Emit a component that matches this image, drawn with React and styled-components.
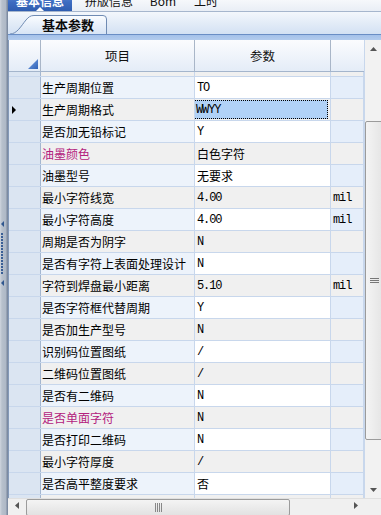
import React from 'react';
import styled, { createGlobalStyle } from 'styled-components';

const GlobalStyle = createGlobalStyle`
  html, body { margin: 0; padding: 0; overflow: hidden; background: #ffffff; }
  body { font-family: "Noto Sans CJK SC", "Noto Sans", sans-serif; font-size: 12px; color: #000; }
  * { box-sizing: border-box; }
`;

const Page = styled.div`
  width: 381px;
  height: 515px;
  display: flex;
  overflow: hidden;
`;

const LeftStrip = styled.div`
  width: 8px;
  flex: none;
  background: linear-gradient(to right, #cfd5de 0px, #b7c0cc 2px, #aeb8c6 6px, #7d8ba1 7px);
  display: flex;
  flex-direction: column;
  align-items: flex-start;
  padding-top: 221px;
`;

const SplitArrow = styled.div`
  width: 0;
  height: 0;
  margin-left: 1px;
  border-top: 3px solid transparent;
  border-bottom: 3px solid transparent;
  border-right: 3px solid #30578f;
`;

const SplitDots = styled.div`
  width: 2px;
  height: 42px;
  margin: 6px 0 5px 1px;
  background: repeating-linear-gradient(to bottom, #3a5f96 0px, #3a5f96 2px, transparent 2px, transparent 3px);
`;

const Main = styled.div`
  flex: 1;
  display: flex;
  flex-direction: column;
  min-width: 0;
`;

const TopTabs = styled.div`
  height: 12px;
  flex: none;
  overflow: hidden;
  display: flex;
  align-items: flex-end;
  background: linear-gradient(to bottom, #f6f8fb, #e9eef5);
  border-bottom: 1px solid #a6b6cd;
`;

const TopTab = styled.div`
  position: relative;
  height: 22px;
  flex: none;
  width: ${p => p.$w}px;
  display: flex;
  align-items: center;
  justify-content: center;
  font-size: 12px;
  font-weight: ${p => (p.$active ? 700 : 400)};
  color: ${p => (p.$active ? '#ffffff' : '#111')};
  background: ${p => (p.$active ? 'linear-gradient(to bottom, #6f9be0, #3d6cc1 60%, #2f5db0)' : 'transparent')};
  ${p => p.$active && `
    &::after {
      content: '';
      position: absolute;
      left: 28px;
      bottom: 0;
      width: 0;
      height: 0;
      border-left: 4px solid transparent;
      border-right: 4px solid transparent;
      border-bottom: 4px solid #ffffff;
    }
  `}
`;

const SubBar = styled.div`
  height: 22px;
  flex: none;
  background: linear-gradient(to bottom, #f3f7fc, #d3e1f3);
  display: flex;
  align-items: flex-end;
  padding-left: 2px;
`;

const SubTab = styled.div`
  position: relative;
  width: 97px;
  height: 19px;
  display: flex;
  align-items: center;
  padding-left: 32px;
  font-size: 13px;
  font-weight: 700;
  color: #0b0b0b;
`;

const TabShape = styled.svg`
  position: absolute;
  left: 0;
  top: 0;
  z-index: 0;
`;

const SubTabLabel = styled.span`
  position: relative;
  z-index: 1;
  line-height: 13px;
`;

const BlueBand = styled.div`
  height: 6px;
  flex: none;
  border-top: 1px solid #6a8ec5;
  background: linear-gradient(to bottom, #a4c1ea, #b3cced);
`;

const GridArea = styled.div`
  flex: 1;
  display: flex;
  flex-direction: column;
  min-height: 0;
`;

const GridMain = styled.div`
  flex: 1;
  display: flex;
  min-height: 0;
`;

const Table = styled.div`
  width: 356px;
  flex: none;
  display: flex;
  flex-direction: column;
  border-left: 1px solid #8499b8;
  min-height: 0;
`;

const Cols = `32px 154px 136px 33px`;

const HeaderRow = styled.div`
  height: 32px;
  flex: none;
  display: grid;
  grid-template-columns: ${Cols};
  background: linear-gradient(to bottom, #fbfcfe, #e4ecf7);
  border-bottom: 1px solid #a4b5cc;
`;

const HeaderCell = styled.div`
  display: flex;
  align-items: center;
  justify-content: center;
  position: relative;
  border-right: ${p => (p.$last ? 'none' : '1px solid #a9b6c8')};
  font-size: 12.5px;
  color: #111;
`;

const CornerMark = styled.svg`
  position: absolute;
  right: 2px;
  bottom: 2px;
`;

const Body = styled.div`
  flex: 1;
  overflow: hidden;
  min-height: 0;
`;

const Row = styled.div`
  height: ${p => p.$h}px;
  display: grid;
  grid-template-columns: ${Cols};
  border-bottom: 1px solid #c8d7ec;
`;

const RowHead = styled.div`
  background: #dbe5f2;
  border-right: 1px solid #a3b6d0;
  display: flex;
  align-items: center;
  padding-left: 3px;
`;

const Cell = styled.div`
  display: flex;
  align-items: center;
  overflow: hidden;
  white-space: nowrap;
  padding-left: ${p => p.$pad}px;
  border-right: 1px solid #c8d7ec;
  background: ${p => p.$bg};
  color: ${p => (p.$pink ? '#b3207d' : '#000')};
  font-size: 12px;
`;

const ValueText = styled.span`
  display: inline-flex;
  align-items: center;
  height: 19px;
  padding-left: 1px;
  font-family: ${p => (p.$mono ? '"Liberation Mono", "Noto Sans CJK SC", monospace' : '"Noto Sans CJK SC", sans-serif')};
  font-size: 12px;
  letter-spacing: ${p => (p.$mono ? '-1.1px' : '0')};
  font-weight: 400;
  ${p => p.$selected && `
    width: 134px;
    margin-left: -2px;
    padding-left: 2px;
    background: #b1d2f7;
    outline: 1px dotted #000;
    outline-offset: -1px;
  `}
`;

const VScroll = styled.div`
  width: 17px;
  flex: none;
  position: relative;
  background: #f2f2f2;
  border-left: 1px solid #c8d7ec;
  display: flex;
  flex-direction: column;
  align-items: stretch;
`;

const ArrowBox = styled.div`
  height: 17px;
  flex: none;
  display: flex;
  align-items: center;
  justify-content: center;
`;

const Thumb = styled.div`
  margin-top: ${p => p.$top}px;
  height: ${p => p.$h}px;
  margin-left: 0;
  margin-right: -3px;
  border: 1px solid #9b9b9b;
  border-radius: 2px;
  background: linear-gradient(to right, #f4f4f4, #e4e4e4);
  display: flex;
  align-items: center;
  justify-content: center;
`;

const Spacer = styled.div`
  flex: 1;
`;

const HScrollRow = styled.div`
  height: 17px;
  flex: none;
  display: flex;
  border-top: 1px solid #e0e0e0;
`;

const HScroll = styled.div`
  width: 356px;
  flex: none;
  background: #f0f0f0;
  display: flex;
  align-items: flex-start;
`;

const HArrow = styled.div`
  width: 17px;
  height: 12px;
  flex: none;
  display: flex;
  align-items: center;
  justify-content: center;
`;

const HThumb = styled.div`
  width: 264px;
  height: 17px;
  margin-left: 1px;
  border: 1px solid #9b9b9b;
  border-radius: 2px;
  background: linear-gradient(to bottom, #f4f4f4, #e2e2e2);
  display: flex;
  justify-content: center;
  padding-top: 3px;
`;

const Corner = styled.div`
  width: 17px;
  flex: none;
  background: #f0f0f0;
`;

const rows = [
  { name: '', value: '', partial: true },
  { name: '生产周期位置', value: 'TO' },
  { name: '生产周期格式', value: 'WWYY', selected: true },
  { name: '是否加无铅标记', value: 'Y' },
  { name: '油墨颜色', value: '白色字符', pink: true },
  { name: '油墨型号', value: '无要求' },
  { name: '最小字符线宽', value: '4.00', unit: 'mil' },
  { name: '最小字符高度', value: '4.00', unit: 'mil' },
  { name: '周期是否为阴字', value: 'N' },
  { name: '是否有字符上表面处理设计', value: 'N' },
  { name: '字符到焊盘最小距离', value: '5.10', unit: 'mil' },
  { name: '是否字符框代替周期', value: 'Y' },
  { name: '是否加生产型号', value: 'N' },
  { name: '识别码位置图纸', value: '/' },
  { name: '二维码位置图纸', value: '/' },
  { name: '是否有二维码', value: 'N' },
  { name: '是否单面字符', value: 'N', pink: true },
  { name: '是否打印二维码', value: 'N' },
  { name: '最小字符厚度', value: '/' },
  { name: '是否高平整度要求', value: '否' },
  { name: '是否大板加批次号', value: '' },
];

const isAscii = s => /^[\x00-\x7f]*$/.test(s);

const Tri = ({ dir }) => {
  const pts = {
    up: '0,4 7,4 3.5,0',
    down: '0,0 7,0 3.5,4',
  };
  return (
    <svg width="7" height="4" viewBox="0 0 7 4">
      <polygon points={pts[dir]} fill="#555" />
    </svg>
  );
};

const HTri = ({ dir }) => (
  <svg width="4" height="7" viewBox="0 0 4 7">
    <polygon points={dir === 'left' ? '4,0 4,7 0,3.5' : '0,0 0,7 4,3.5'} fill="#555" />
  </svg>
);

export default function App() {
  return (
    <>
      <GlobalStyle />
      <Page>
        <LeftStrip>
          <SplitArrow />
          <SplitDots />
          <SplitArrow />
        </LeftStrip>
        <Main>
          <TopTabs>
            <TopTab $active $w={64}>基本信息</TopTab>
            <TopTab $w={12} />
            <TopTab $w={50}>拼版信息</TopTab>
            <TopTab $w={20} />
            <TopTab $w={18}>Bom</TopTab>
            <TopTab $w={22} />
            <TopTab $w={24}>工时</TopTab>
          </TopTabs>
          <SubBar>
            <SubTab>
              <TabShape width="97" height="19" viewBox="0 0 97 19">
                <defs>
                  <linearGradient id="tabg" x1="0" y1="0" x2="0" y2="1">
                    <stop offset="0" stopColor="#fbfdff" />
                    <stop offset="1" stopColor="#d7e4f5" />
                  </linearGradient>
                </defs>
                <path
                  d="M0,19 C7,19 11,11 16,5 C18.5,2 20.5,0.5 24,0.5 L93,0.5 Q96.5,0.5 96.5,4 L96.5,19"
                  fill="url(#tabg)"
                  stroke="#6f8bb3"
                  strokeWidth="1"
                />
              </TabShape>
              <SubTabLabel>基本参数</SubTabLabel>
            </SubTab>
          </SubBar>
          <BlueBand />
          <GridArea>
            <GridMain>
              <Table>
                <HeaderRow>
                  <HeaderCell>
                    <CornerMark width="10" height="10" viewBox="0 0 10 10">
                      <defs>
                        <linearGradient id="cm" x1="0" y1="0" x2="1" y2="1">
                          <stop offset="0" stopColor="#7aa6e6" />
                          <stop offset="1" stopColor="#2f61b6" />
                        </linearGradient>
                      </defs>
                      <polygon points="10,0 10,10 0,10" fill="url(#cm)" />
                    </CornerMark>
                  </HeaderCell>
                  <HeaderCell>项目</HeaderCell>
                  <HeaderCell>参数</HeaderCell>
                  <HeaderCell $last />
                </HeaderRow>
                <Body>
                  {rows.map((r, i) => {
                    const alt = i % 2 === 0;
                    const grey = '#f0f0f0';
                    return (
                      <Row key={i} $h={r.partial ? 5 : 22}>
                        <RowHead>
                          {r.selected && (
                            <svg width="4" height="8" viewBox="0 0 4 8">
                              <polygon points="0,0 4,4 0,8" fill="#000" />
                            </svg>
                          )}
                        </RowHead>
                        <Cell $pad={1} $bg={alt ? grey : '#edf3fb'} $pink={r.pink}>
                          {r.name}
                        </Cell>
                        <Cell $pad={1} $bg={alt ? grey : '#ffffff'}>
                          {r.value && (
                            <ValueText $mono={isAscii(r.value)} $selected={r.selected}>
                              {r.value}
                            </ValueText>
                          )}
                        </Cell>
                        <Cell $pad={1} $bg={alt ? grey : '#e5eefa'}>
                          {r.unit && <ValueText $mono>{r.unit}</ValueText>}
                        </Cell>
                      </Row>
                    );
                  })}
                </Body>
              </Table>
              <VScroll>
                <ArrowBox>
                  <Tri dir="up" />
                </ArrowBox>
                <Thumb $top={64} $h={319}>
                  <svg width="9" height="6" viewBox="0 0 9 6">
                    <path d="M0,0.5H9M0,2.5H9M0,4.5H9" stroke="#777" strokeWidth="1" />
                  </svg>
                </Thumb>
                <Spacer />
                <ArrowBox>
                  <Tri dir="down" />
                </ArrowBox>
              </VScroll>
            </GridMain>
            <HScrollRow>
              <HScroll>
                <HArrow>
                  <HTri dir="left" />
                </HArrow>
                <HThumb>
                  <svg width="7" height="9" viewBox="0 0 7 9">
                    <path d="M0.5,0V9M2.5,0V9M4.5,0V9M6.5,0V9" stroke="#888" strokeWidth="1" />
                  </svg>
                </HThumb>
                <Spacer />
                <HArrow>
                  <HTri dir="right" />
                </HArrow>
              </HScroll>
              <Corner />
            </HScrollRow>
          </GridArea>
        </Main>
      </Page>
    </>
  );
}
